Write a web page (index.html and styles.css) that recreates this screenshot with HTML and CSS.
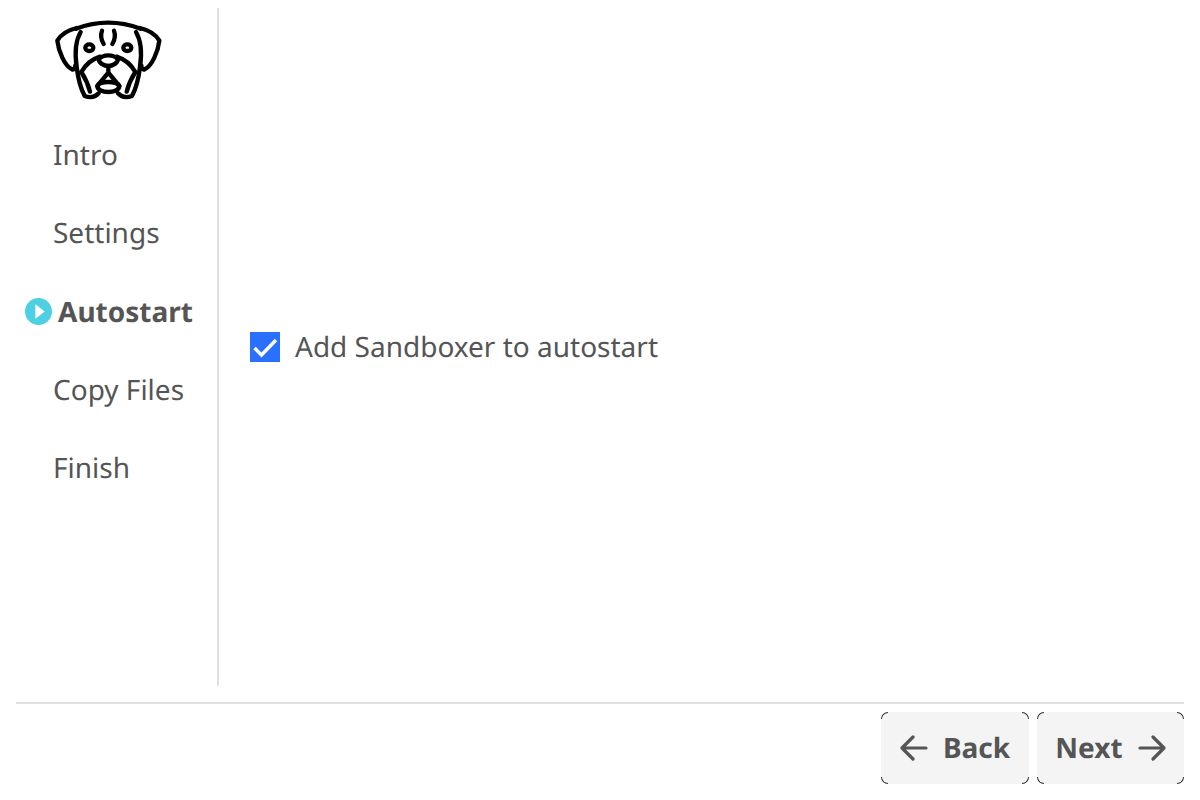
FILE: index.html
```html
<!DOCTYPE html>
<html lang="en">
<head>
    <meta charset="UTF-8">
    <title>Sandboxer Setup</title>
    <link rel="stylesheet" href="styles.css">
</head>
<body>
    <div class="wizard">
        <div class="main">
            <aside class="sidebar">
                <svg class="logo" viewBox="0 0 390 300" fill="none" stroke="#000" stroke-width="13" stroke-linecap="round" stroke-linejoin="round">
                    <path d="M108 56Q205 20 302 56"/>
                    <path d="M110 54C85 60 62 74 52 92C56 125 74 168 96 178C102 180 106 174 106 166"/>
                    <path d="M300 54C325 60 348 74 358 92C354 125 336 168 314 178C308 180 304 174 304 166"/>
                    <path d="M122 66C108 90 104 130 110 170C114 205 122 235 134 258C150 264 165 262 176 250"/>
                    <path d="M288 66C302 90 306 130 300 170C296 205 288 235 276 258C260 264 245 262 234 250"/>
                    <path d="M124 186C136 165 155 148 180 140"/>
                    <path d="M286 186C274 165 255 148 230 140"/>
                    <path d="M124 186C136 205 145 225 150 245"/>
                    <path d="M286 186C274 205 265 225 260 245"/>
                    <path d="M176 148C190 132 220 132 234 148C232 160 218 168 205 168C192 168 178 160 176 148Z"/>
                    <path d="M205 168V188L172 228M205 188L238 228"/>
                    <path d="M172 228C178 212 232 212 238 228C238 252 172 252 172 228Z"/>
                    <path d="M186 62C181 75 184 90 191 102"/>
                    <path d="M222 62C227 75 224 90 217 102"/>
                    <ellipse cx="148" cy="113" rx="12" ry="10"/>
                    <ellipse cx="262" cy="113" rx="12" ry="10"/>
                </svg>
                <nav class="steps">
                    <div class="step">Intro</div>
                    <div class="step">Settings</div>
                    <div class="step active">
                        <svg class="step-icon" viewBox="0 0 26 26">
                            <circle cx="13" cy="13" r="13" fill="#4dd0e1"/>
                            <path d="M10 6L19 13L10 20Z" fill="#fff"/>
                        </svg>
                        Autostart
                    </div>
                    <div class="step">Copy Files</div>
                    <div class="step">Finish</div>
                </nav>
            </aside>
            <section class="content">
                <label class="check-row">
                    <span class="checkbox">
                        <svg viewBox="0 0 30 30" fill="none" stroke="#fff" stroke-width="3.4">
                            <path d="M4.5 16L11.5 23L26 8"/>
                        </svg>
                    </span>
                    Add Sandboxer to autostart
                </label>
            </section>
        </div>
        <footer class="actions">
            <button class="btn back">
                <i class="c tl"></i><i class="c tr"></i><i class="c bl"></i><i class="c br"></i>
                <svg class="arrow" viewBox="0 0 28 28" fill="none" stroke="#555" stroke-width="3.2" stroke-linecap="round" stroke-linejoin="round">
                    <path d="M2 14H26M13 3L2 14L13 25"/>
                </svg>
                Back
            </button>
            <button class="btn next">
                <i class="c tl"></i><i class="c tr"></i><i class="c bl"></i><i class="c br"></i>
                Next
                <svg class="arrow" viewBox="0 0 28 28" fill="none" stroke="#555" stroke-width="3.2" stroke-linecap="round" stroke-linejoin="round">
                    <path d="M2 14H26M15 3L26 14L15 25"/>
                </svg>
            </button>
        </footer>
    </div>
</body>
</html>
```

FILE: styles.css
```css
html, body {
    margin: 0;
    padding: 0;
}

body {
    font-family: "Noto Sans", sans-serif;
    font-size: 28px;
    color: #555;
    background-color: #fff;
    text-rendering: geometricPrecision;
}

.wizard {
    width: 1168px;
    height: 800px;
    margin: 0 auto;
    padding-top: 8px;
    box-sizing: border-box;
}

.main {
    display: flex;
    height: 678px;
}

.sidebar {
    width: 201px;
    border-right: 2px solid #e0e0e0;
    flex-shrink: 0;
}

.logo {
    display: block;
    width: 130px;
    height: 100px;
    margin: 2px 0 0 24px;
}

.steps {
    margin-top: 6px;
}

.step {
    display: flex;
    align-items: center;
    height: 78.25px;
    padding-left: 37px;
}

.step.active {
    padding-left: 8px;
    font-weight: 700;
}

.step-icon {
    width: 27px;
    height: 27px;
    margin-right: 6px;
    margin-left: 1px;
}

.content {
    flex: 1;
    display: flex;
    align-items: center;
    padding-left: 31px;
}

.check-row {
    display: flex;
    align-items: center;
}

.checkbox {
    width: 30px;
    height: 30px;
    margin-right: 15px;
    background-color: #2970ff;
}

.checkbox svg {
    display: block;
}

.actions {
    display: flex;
    justify-content: flex-end;
    gap: 8px;
    margin-top: 16px;
    padding-top: 8px;
    border-top: 2px solid #e0e0e0;
}

.btn {
    position: relative;
    display: flex;
    align-items: center;
    justify-content: center;
    gap: 15px;
    height: 72px;
    padding: 0;
    border: none;
    border-radius: 8px;
    background-color: #f4f4f4;
    color: #555;
    font-family: inherit;
    font-size: 28px;
    font-weight: 700;
    text-rendering: inherit;
}

.back {
    width: 148px;
}

.next {
    width: 147px;
}

.arrow {
    width: 28px;
    height: 28px;
}

/* thin dark arcs on the button corners */
.c {
    position: absolute;
    width: 7px;
    height: 7px;
    box-sizing: border-box;
    border: 0 solid #333;
}

.tl {
    top: 0;
    left: 0;
    border-top-width: 1px;
    border-left-width: 1px;
    border-top-left-radius: 7px;
}

.tr {
    top: 0;
    right: 0;
    border-top-width: 1px;
    border-right-width: 1px;
    border-top-right-radius: 7px;
}

.bl {
    bottom: 0;
    left: 0;
    border-bottom-width: 1px;
    border-left-width: 1px;
    border-bottom-left-radius: 7px;
}

.br {
    bottom: 0;
    right: 0;
    border-bottom-width: 1px;
    border-right-width: 1px;
    border-bottom-right-radius: 7px;
}
```
